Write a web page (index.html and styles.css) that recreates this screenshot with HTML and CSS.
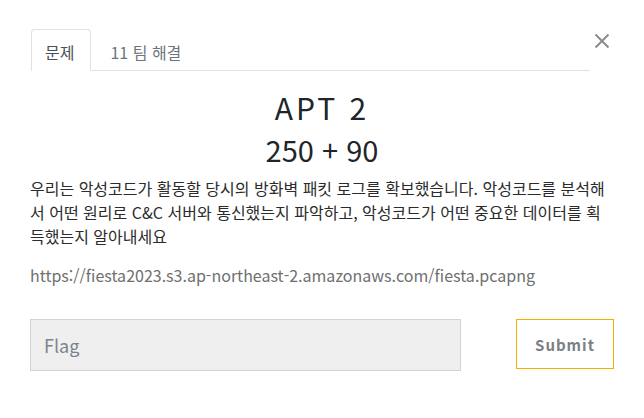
FILE: index.html
```html
<!DOCTYPE html>
<html lang="ko">
<head>
<meta charset="utf-8">
<title>APT 2</title>
<link rel="stylesheet" href="styles.css">
</head>
<body>
<div class="modal">
  <div class="header">
    <nav class="tabs">
      <a class="tab active">문제</a>
      <a class="tab">11 팀 해결</a>
    </nav>
    <button class="close" type="button" aria-label="Close">
      <svg width="16" height="16" viewBox="0 0 16 16"><path d="M1.5 1.5L14.5 14.5M14.5 1.5L1.5 14.5" stroke="#888" stroke-width="1.8" fill="none"/></svg>
    </button>
  </div>
  <h3 class="name">APT 2</h3>
  <h4 class="value">250 + 90</h4>
  <p class="desc">우리는 악성코드가 활동할 당시의 방화벽 패킷 로그를 확보했습니다. 악성코드를 분석해서 어떤 원리로 C&amp;C 서버와 통신했는지 파악하고, 악성코드가 어떤 중요한 데이터를 획득했는지 알아내세요</p>
  <p class="url">https://fiesta2023.s3.ap-northeast-2.amazonaws.com/fiesta.pcapng</p>
  <form class="form">
    <input class="flag" type="text" placeholder="Flag">
    <button class="submit" type="button">Submit</button>
  </form>
</div>
</body>
</html>
```
FILE: styles.css
```css
html, body {
  margin: 0;
  padding: 0;
  background: #fff;
}
body {
  font-family: "Noto Sans CJK KR", "Noto Sans", sans-serif;
  font-size: 16px;
  color: #2a2a2a;
}
.modal {
  padding: 29px 30px 0 30px;
}
.header {
  display: flex;
  align-items: flex-start;
}
.tabs {
  flex: 1;
  display: flex;
  border-bottom: 1px solid #dee2e6;
  margin-left: 1px;
}
.tab {
  display: block;
  font-size: 16px;
  line-height: 24px;
  padding: 10px 16px 6px 13px;
  border: 1px solid transparent;
  border-bottom: none;
  margin-bottom: -1px;
  color: #6c757d;
}
.tab.active {
  border-color: #dee2e6;
  border-radius: 4px 4px 0 0;
  background: #fff;
  color: #495057;
  padding-bottom: 7px;
}
.tab + .tab {
  padding-left: 18px;
}
.close {
  width: 24px;
  height: 24px;
  margin-top: 4px;
  padding: 0;
  border: 0;
  background: none;
  display: flex;
  justify-content: center;
  align-items: flex-start;
}
.name {
  margin: 18px 0 0;
  font-size: 30px;
  line-height: 36px;
  font-weight: 400;
  letter-spacing: 3px;
  text-align: center;
  color: #212529;
}
.value {
  margin: 7px 0 0;
  font-size: 29px;
  line-height: 34px;
  font-weight: 400;
  text-align: center;
  color: #212529;
}
.desc {
  margin: 10px 0 0;
  font-size: 16px;
  line-height: 24px;
  color: #2b2b2b;
}
.url {
  margin: 15px 0 0;
  font-size: 16px;
  line-height: 24px;
  color: #6f6f6f;
}
.form {
  margin: 32px 0 0;
  display: flex;
  justify-content: space-between;
  align-items: flex-start;
}
.flag {
  box-sizing: border-box;
  width: 431px;
  height: 52px;
  margin: 0;
  padding: 0 13px;
  border: 1px solid #ced4da;
  background: #efefef;
  font-family: "Noto Sans CJK KR", "Noto Sans", sans-serif;
  font-size: 18px;
  color: #495057;
  outline: none;
}
.flag::placeholder {
  color: #7a848c;
}
.submit {
  box-sizing: border-box;
  width: 98px;
  height: 50px;
  margin: 0;
  padding: 0;
  border: 1px solid #f5b000;
  background: #fff;
  font-family: "Noto Sans CJK KR", "Noto Sans", sans-serif;
  font-size: 15px;
  font-weight: 700;
  letter-spacing: 1px;
  color: #7a7f85;
}
```
